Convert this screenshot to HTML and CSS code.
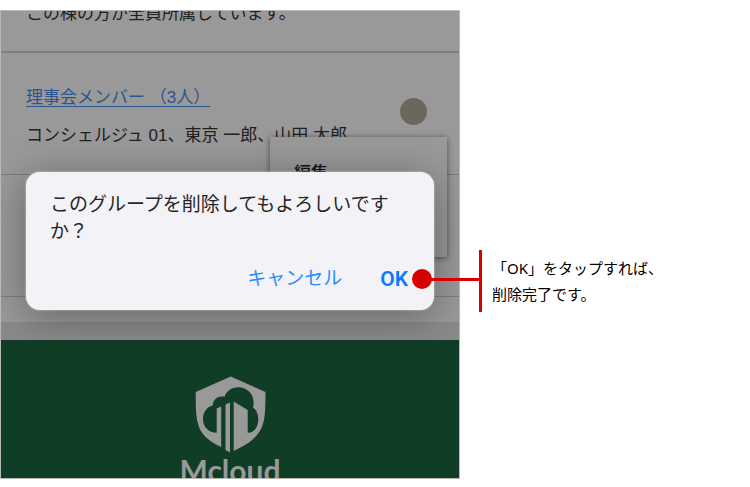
FILE: index.html
```html
<!DOCTYPE html>
<html lang="ja">
<head>
<meta charset="utf-8">
<meta name="viewport" content="width=device-width, initial-scale=1">
<title>グループの削除</title>
<link rel="stylesheet" href="styles.css">
</head>
<body>
<main class="guide">
  <section class="screen">
    <ul class="groups">
      <li class="group group-first"><p class="members">この棟の方が全員所属しています。</p></li>
      <li class="group">
        <div class="group-body">
          <a class="group-link" href="#members">理事会メンバー （3人）</a>
          <p class="members">コンシェルジュ 01、東京 一郎、山田 太郎</p>
        </div>
        <button class="more" type="button" aria-label="メニュー"></button>
        <div class="menu"><button class="menu-item" type="button">編集</button></div>
      </li>
      <li class="group group-empty"></li>
    </ul>
    <div class="gap"></div>
    <footer class="footer">
      <svg class="logo" viewBox="0 0 72 78" aria-hidden="true">
        <path class="shield" d="M36.7 0.5 L71.5 16 C71.5 32 71 40 69.5 46 C66 60 56 67 39.7 75 V25.5 L53.7 34 V56.7 C61 56.7 64.3 50 64.3 43.5 C64.3 38 62.5 34 59 31.5 C62 20 54 11.3 44.5 11.3 C37 11.3 32.5 15.5 30.5 20.8 C24.5 19.5 19 23 18.7 29.5 C12.5 31 9 36.5 9 43 C9 51 14.5 56.7 22.7 56.7 V32.5 L27.2 30.5 V71 C14 65 6 58 3.6 46 C2 40 1.7 32 1.7 16 Z"/>
        <path class="shield" d="M31.5 28.5 L36 26.5 V76.5 L31.5 74 Z"/>
      </svg>
      <div class="wordmark">Mcloud</div>
    </footer>
    <div class="dialog" role="alertdialog" aria-labelledby="message">
      <p class="message" id="message">このグループを削除してもよろしいですか？</p>
      <div class="actions">
        <button class="action" type="button">キャンセル</button>
        <button class="action action-ok" type="button">OK</button>
      </div>
    </div>
  </section>
  <aside class="callout">
    <p class="note">「OK」をタップすれば、<br>削除完了です。</p>
  </aside>
</main>
</body>
</html>
```

FILE: styles.css
```css
* {
  box-sizing: border-box;
}

body {
  margin: 0;
  background: #fff;
  color: #000;
  font-family: "Liberation Sans", "Noto Sans CJK JP", sans-serif;
}

p,
ul {
  margin: 0;
  padding: 0;
}

button {
  border: 0;
  padding: 0;
  background: none;
  font: inherit;
  color: inherit;
}

.guide {
  display: grid;
  grid-template-columns: 46fr 29fr;
  align-items: start;
  padding-top: 10px;
}

/* Phone screen */
.screen {
  position: relative;
  overflow: hidden;
  border: 1px solid #b8b8b8;
  background: #999;
}

.groups {
  list-style: none;
}

.group {
  position: relative;
  display: flex;
  justify-content: space-between;
  min-height: 122px;
  padding: 32px 32px 0 25px;
  border-bottom: 1px solid #7c7c7c;
}

.group-first {
  min-height: 0;
  margin-top: -10px;
  padding-top: 0;
  padding-bottom: 24px;
  border-bottom: 2px solid #808080;
}

.group-body {
  display: flex;
  flex-direction: column;
  align-items: flex-start;
  gap: 12px;
}

.group-link,
.members {
  font-size: 17px;
  line-height: 26px;
  white-space: nowrap;
}

.group-link {
  color: #29568f;
  text-underline-offset: 3px;
}

.members {
  color: #202020;
}

.more {
  width: 27px;
  height: 27px;
  margin-top: 13px;
  border-radius: 50%;
  background: #6b665e;
}

.menu {
  position: absolute;
  z-index: 1;
  top: 84px;
  right: 12px;
  width: 177px;
  height: 120px;
  padding: 24px;
  background: #999;
  box-shadow: 0 1px 6px rgba(0, 0, 0, 0.5);
}

.menu-item {
  color: #111;
  font-size: 17px;
  font-weight: 500;
  line-height: 26px;
}

.gap {
  height: 43px;
  border-bottom: 18px solid #8a8a8a;
}

.footer {
  display: flex;
  flex-direction: column;
  align-items: center;
  height: 138px;
  padding-top: 36px;
  overflow: hidden;
  background: #103d25;
}

.logo {
  flex: none;
  width: 72px;
  height: 78px;
}

.shield {
  fill: #999;
}

.wordmark {
  color: #999;
  font-family: Lato, sans-serif;
  font-size: 30px;
  font-weight: 700;
  line-height: 32px;
}

/* Confirmation */
.dialog {
  position: absolute;
  z-index: 2;
  top: 161px;
  left: 25px;
  right: 25px;
  padding: 19px 24px 17px;
  border-radius: 14px;
  background: #f2f2f7;
  box-shadow: 0 0 2px #ddd, 0 6px 40px rgba(0, 0, 0, 0.36);
}

.message {
  color: #262626;
  font-size: 19px;
  line-height: 27px;
}

.actions {
  display: flex;
  justify-content: flex-end;
  gap: 38px;
  padding-top: 20px;
}

.action {
  color: #2b8cff;
  font-size: 19px;
  line-height: 28px;
}

.action-ok {
  margin-right: 2px;
  color: #0a7aff;
  font-family: Roboto, sans-serif;
  font-size: 21px;
  font-weight: 600;
}

/* Callout and its leader line */
.callout {
  position: relative;
  z-index: 3;
  margin: 240px 0 0 19px;
  padding: 5px 0 5px 10px;
  border-left: 3px solid #d70000;
}

.callout::before,
.callout::after {
  content: "";
  position: absolute;
  background: #d70000;
}

.callout::before {
  top: 28px;
  left: -60px;
  width: 58px;
  height: 3px;
}

.callout::after {
  top: 19px;
  left: -70px;
  width: 20px;
  height: 20px;
  border-radius: 50%;
}

.note {
  font-family: "Noto Sans", "Noto Sans CJK JP", sans-serif;
  font-size: 15px;
  line-height: 26px;
}
```
